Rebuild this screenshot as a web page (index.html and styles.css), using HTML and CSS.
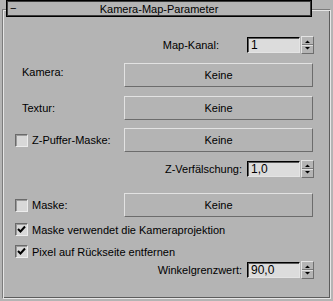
FILE: index.html
```html
<!DOCTYPE html>
<html>
<head>
	<meta charset="utf-8">
	<title>Kamera-Map-Parameter</title>
	<link rel="stylesheet" href="styles.css">
</head>
<body>
	<div class="rollout">
		<div class="rollout-title">
			<span class="collapse">&minus;</span>
			<span>Kamera-Map-Parameter</span>
		</div>

		<div class="row spin-row r1">
			<span class="spin-label map-label">Map-Kanal:</span>
			<div class="spinner">
				<div class="spin-field">1</div>
				<div class="spin-arrows">
					<svg width="13" height="18" viewBox="0 0 13 18"><path d="M4 7h5L6.5 4.5z M4 11h5l-2.5 2.5z" fill="#000"/><path d="M1 8.5h11" stroke="#7a7a7a"/><path d="M1 9.5h11" stroke="#e2e2e2"/></svg>
				</div>
			</div>
		</div>

		<div class="row btn-row r2">
			<span class="cell-label plain label-up">Kamera:</span>
			<button class="pick">Keine</button>
		</div>

		<div class="row btn-row r3">
			<span class="cell-label plain">Textur:</span>
			<button class="pick">Keine</button>
		</div>

		<div class="row btn-row r4">
			<label class="cell-label"><span class="check"></span>Z-Puffer-Maske:</label>
			<button class="pick">Keine</button>
		</div>

		<div class="row spin-row r5">
			<span class="spin-label">Z-Verfälschung:</span>
			<div class="spinner">
				<div class="spin-field">1,0</div>
				<div class="spin-arrows">
					<svg width="13" height="18" viewBox="0 0 13 18"><path d="M4 7h5L6.5 4.5z M4 11h5l-2.5 2.5z" fill="#000"/><path d="M1 8.5h11" stroke="#7a7a7a"/><path d="M1 9.5h11" stroke="#e2e2e2"/></svg>
				</div>
			</div>
		</div>

		<div class="row btn-row r6">
			<label class="cell-label"><span class="check"></span>Maske:</label>
			<button class="pick">Keine</button>
		</div>

		<div class="row check-row r7">
			<label class="cell-label wide"><span class="check on"><svg width="11" height="11" viewBox="0 0 11 11"><path d="M2 5l2.5 2.5L9 2.5" stroke="#000" stroke-width="2" fill="none"/></svg></span>Maske verwendet die Kameraprojektion</label>
		</div>

		<div class="row check-row r8">
			<label class="cell-label wide"><span class="check on"><svg width="11" height="11" viewBox="0 0 11 11"><path d="M2 5l2.5 2.5L9 2.5" stroke="#000" stroke-width="2" fill="none"/></svg></span>Pixel auf Rückseite entfernen</label>
		</div>

		<div class="row spin-row r9">
			<span class="spin-label">Winkelgrenzwert:</span>
			<div class="spinner">
				<div class="spin-field">90,0</div>
				<div class="spin-arrows">
					<svg width="13" height="18" viewBox="0 0 13 18"><path d="M4 7h5L6.5 4.5z M4 11h5l-2.5 2.5z" fill="#000"/><path d="M1 8.5h11" stroke="#7a7a7a"/><path d="M1 9.5h11" stroke="#e2e2e2"/></svg>
				</div>
			</div>
		</div>
	</div>
</body>
</html>
```

FILE: styles.css
```css
body
{
	background: #b4b4b4;
	margin: 0px;
	padding: 9px 2px 0px 2px;
	color: #000;
	font-family: "Liberation Sans", Arial, sans-serif;
	font-size: 11px;
}

.rollout
{
	box-sizing: border-box;
	height: 290px;
	border: 1px solid;
	border-color: #7c7c7c #e6e6e6 #e6e6e6 #7c7c7c;
	box-shadow: inset 1px 1px #e6e6e6, inset -1px -1px #5c5c5c;
	padding: 0px 16px 0px 12px;
}

.rollout-title
{
	box-sizing: border-box;
	height: 17px;
	margin: -10px 2px 0px -9px;
	border: 1px solid #000;
	box-shadow: inset 0px 0px 0px 1px #3c3c3c;
	background: #b4b4b4;
	position: relative;
	display: flex;
	align-items: center;
	justify-content: center;
	line-height: 14px;
}

.collapse
{
	position: absolute;
	left: 3px;
	top: 0px;
}

.row
{
	display: flex;
	align-items: center;
}

.spin-row
{
	height: 18px;
	justify-content: flex-end;
}

.btn-row { height: 24px; }

.check-row { height: 13px; }

.r1 { margin-top: 19px; }
.r2 { margin-top: 9px; }
.r3 { margin-top: 9px; }
.r4 { margin-top: 8px; }
.r5 { margin-top: 8px; }
.r6 { margin-top: 15px; }
.r7 { margin-top: 6px; }
.r8 { margin-top: 9px; }
.r9 { margin-top: 3px; }

.spin-label { margin-right: 5px; }

.map-label { margin-right: 28px; }

.spinner
{
	display: flex;
	align-items: center;
	gap: 1px;
}

.spin-field
{
	box-sizing: border-box;
	width: 53px;
	height: 16px;
	padding-left: 3px;
	background: #dcdcdc;
	border: 1px solid;
	border-color: #000 #e4e4e4 #e4e4e4 #000;
	box-shadow: inset 1px 1px #5a5a5a;
	line-height: 14px;
	font-size: 12px;
}

.spin-arrows
{
	box-sizing: border-box;
	width: 13px;
	height: 18px;
	display: flex;
	position: relative;
	border: 1px solid;
	border-color: #e4e4e4 #6e6e6e #6e6e6e #e4e4e4;
}

.spin-arrows svg
{
	position: absolute;
	left: -1px;
	top: -1px;
}

.cell-label
{
	width: 109px;
	flex: none;
	display: flex;
	align-items: center;
}

.cell-label.plain { padding-left: 7px; box-sizing: border-box; }

.cell-label.wide { width: auto; }

.label-up { position: relative; top: -3px; }

.check
{
	box-sizing: border-box;
	width: 13px;
	height: 13px;
	margin-right: 4px;
	background: #d8d8d8;
	border: 1px solid;
	border-color: #6a6a6a #ececec #ececec #6a6a6a;
	box-shadow: inset 1px 1px #9a9a9a;
	display: flex;
	align-items: center;
	justify-content: center;
}

.pick
{
	box-sizing: border-box;
	width: 189px;
	height: 24px;
	padding: 0px;
	background: #b4b4b4;
	border: 1px solid;
	border-color: #e2e2e2 #6c6c6c #6c6c6c #e2e2e2;
	font-family: "Liberation Sans", Arial, sans-serif;
	font-size: 11px;
	color: #000;
}
```
